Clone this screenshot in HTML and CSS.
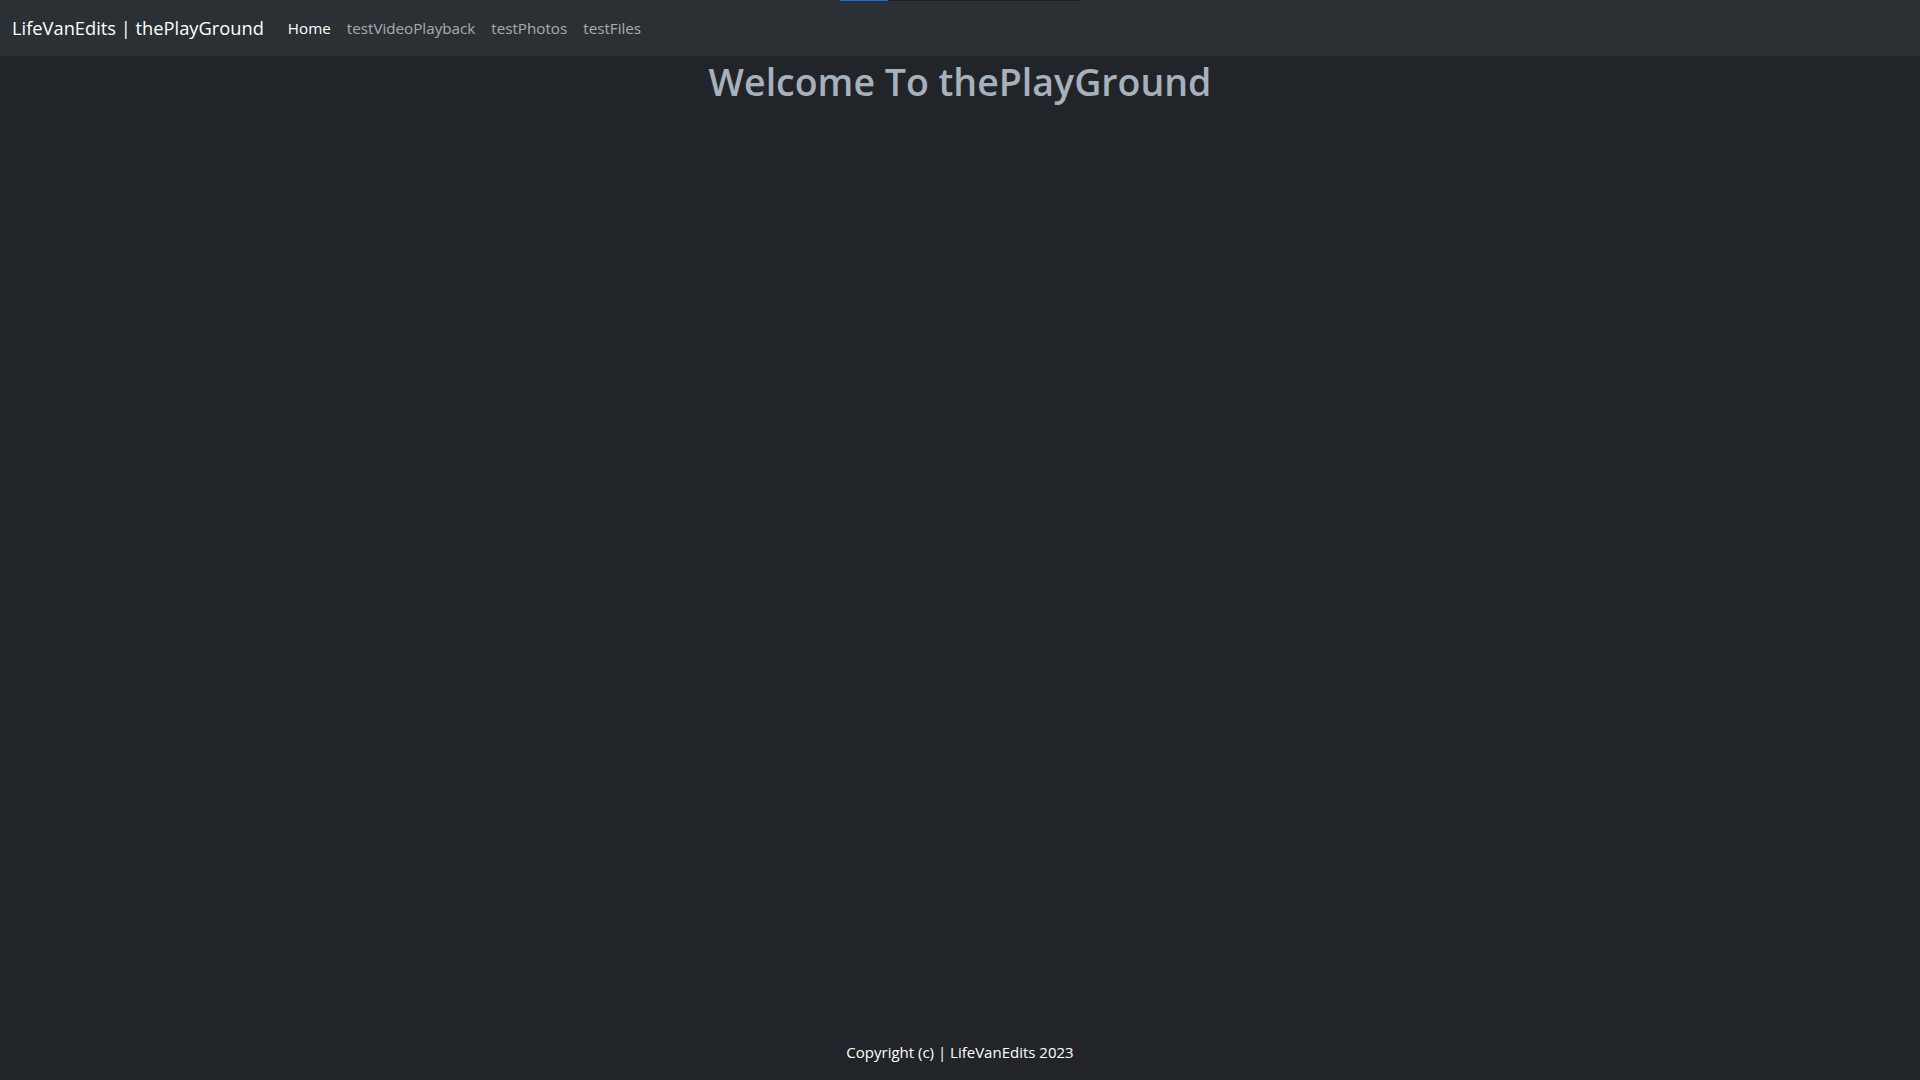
FILE: index.html
```html
<!DOCTYPE html>
<html lang="en">
<head>
<meta charset="utf-8">
<title>thePlayGround</title>
<link rel="stylesheet" href="styles.css">
</head>
<body>
<div class="progress-track"><div class="progress-fill"></div></div>
<div class="page">
  <nav class="navbar">
    <a class="brand" href="#">LifeVanEdits | thePlayGround</a>
    <ul class="nav">
      <li><a class="nav-link active" href="#">Home</a></li>
      <li><a class="nav-link" href="#">testVideoPlayback</a></li>
      <li><a class="nav-link" href="#">testPhotos</a></li>
      <li><a class="nav-link" href="#">testFiles</a></li>
    </ul>
  </nav>
  <main class="main">
    <h1 class="title">Welcome To thePlayGround</h1>
  </main>
  <footer class="footer">Copyright (c) | LifeVanEdits 2023</footer>
</div>
</body>
</html>
```
FILE: styles.css
```css
* { box-sizing: border-box; }
html, body { margin: 0; padding: 0; }
body {
  background: #212529;
  color: #dee2e6;
  font-family: "Open Sans", "Noto Sans", sans-serif;
  font-size: 15px;
  line-height: 1.5;
}
.page {
  min-height: 100vh;
  display: flex;
  flex-direction: column;
}
.progress-track {
  position: absolute;
  top: 0;
  left: 840px;
  width: 241px;
  height: 1px;
  background: #1c1f22;
}
.progress-fill {
  width: 48px;
  height: 100%;
  background: #0b6fd6;
}
.navbar {
  background: #2b3035;
  height: 56px;
  display: flex;
  align-items: center;
  padding: 0 12px;
}
.brand {
  color: #fff;
  text-decoration: none;
  font-size: 18.3px;
  margin-right: 16px;
}
.nav {
  list-style: none;
  display: flex;
  margin: 0;
  padding: 0;
}
.nav-link {
  display: block;
  padding: 8px;
  color: rgba(255, 255, 255, 0.6);
  text-decoration: none;
  font-size: 15.2px;
}
.nav-link.active { color: #fff; }
.main { flex: 1; }
.title {
  margin: 0;
  text-align: center;
  color: #a7b1bc;
  font-size: 37.5px;
  font-weight: 600;
  line-height: 48px;
  padding-top: 2px;
}
.footer {
  text-align: center;
  color: #fff;
  padding: 16px 0;
  line-height: 24px;
  font-size: 15px;
}
```
